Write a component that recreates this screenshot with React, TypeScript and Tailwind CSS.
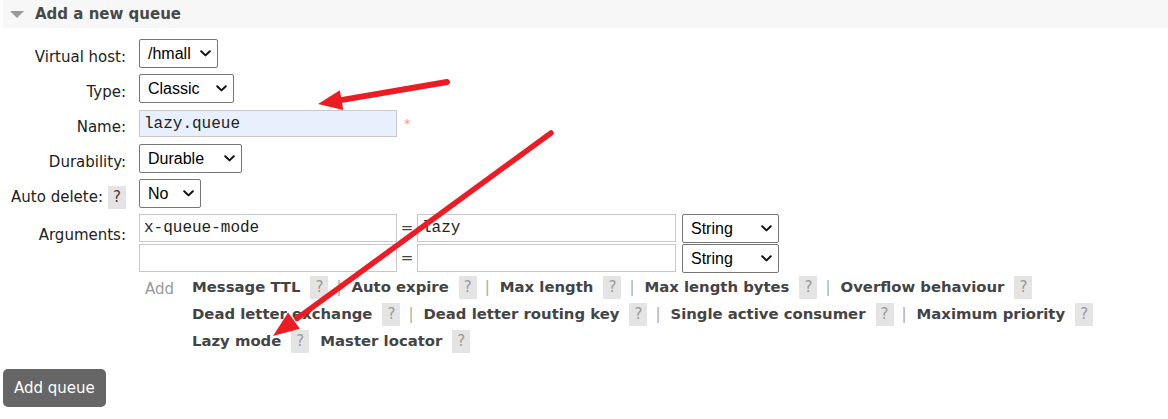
import React from 'react';

const Chevron: React.FC = () => (
    <svg width="11" height="7" viewBox="0 0 11 7" className="shrink-0">
        <path d="M1.2 1.2 L5.5 5.4 L9.8 1.2" fill="none" stroke="#111" strokeWidth="2" strokeLinecap="round" strokeLinejoin="round" />
    </svg>
);

const FakeSelect: React.FC<{ value: string; width: string }> = ({ value, width }) => (
    <div className={`${width} h-[29px] border border-[#767676] rounded-[2px] bg-white flex items-center justify-between pl-[8px] pr-[6px] text-[16px] text-black font-['Liberation_Sans',Arial,sans-serif]`}>
        <span className="leading-none">{value}</span>
        <Chevron />
    </div>
);

const Help: React.FC<{ dark?: boolean }> = ({ dark }) => (
    <span className={`inline-flex items-center justify-center w-[18px] h-[23px] bg-[#e4e4e4] text-[15px] font-normal ${dark ? 'text-[#553333]' : 'text-[#999]'}`}>?</span>
);

const Sep: React.FC = () => <span className="ml-[8px] mr-[10px] text-[#aaa] font-normal text-[15px]">|</span>;

type Arg = { name: string; last?: boolean };

const rows: Arg[][] = [
    [{ name: 'Message TTL' }, { name: 'Auto expire' }, { name: 'Max length' }, { name: 'Max length bytes' }, { name: 'Overflow behaviour', last: true }],
    [{ name: 'Dead letter exchange' }, { name: 'Dead letter routing key' }, { name: 'Single active consumer' }, { name: 'Maximum priority', last: true }],
    [{ name: 'Lazy mode', last: true }, { name: 'Master locator', last: true }],
];

const Label: React.FC<{ children: React.ReactNode }> = ({ children }) => (
    <div className="w-[126px] shrink-0 flex justify-end items-center pt-[8px] text-[#222]">{children}</div>
);

export default function App() {
    return (
        <div className="relative w-[1168px] h-[419px] bg-white overflow-hidden font-['DejaVu_Sans',Verdana,sans-serif] text-[15px]">
            {/* Header */}
            <div className="ml-[3px] h-[28px] bg-[#f7f7f7] flex items-center">
                <svg width="14" height="7" viewBox="0 0 14 7" className="ml-[7px]">
                    <path d="M0 0 H14 L7 7 Z" fill="#999" />
                </svg>
                <span className="ml-[11px] font-bold text-[#484848] leading-none">Add a new queue</span>
            </div>

            {/* Form */}
            <div className="mt-[8px] flex flex-col">
                <div className="h-[35px] flex items-center">
                    <Label>Virtual host:</Label>
                    <div className="ml-[13px]"><FakeSelect value="/hmall" width="w-[79px]" /></div>
                </div>
                <div className="h-[35px] flex items-center">
                    <Label>Type:</Label>
                    <div className="ml-[13px]"><FakeSelect value="Classic" width="w-[95px]" /></div>
                </div>
                <div className="h-[35px] flex items-center">
                    <Label>Name:</Label>
                    <div className="ml-[13px] w-[258px] h-[27px] border border-[#c8c8c8] bg-[#e8f0fe] flex items-center pl-[4px] text-[16px] text-[#222] font-['Liberation_Mono','Courier_New',monospace]">lazy.queue</div>
                    <span className="ml-[7px] text-[13px] text-[#f39a9a]">*</span>
                </div>
                <div className="h-[35px] flex items-center">
                    <Label>Durability:</Label>
                    <div className="ml-[13px]"><FakeSelect value="Durable" width="w-[103px]" /></div>
                </div>
                <div className="h-[35px] flex items-center">
                    <div className="w-[126px] shrink-0 flex justify-end items-center gap-[5px] text-[#222]">
                        <span className="pt-[8px]">Auto delete:</span>
                        <span className="pt-[8px]"><Help dark /></span>
                    </div>
                    <div className="ml-[13px]"><FakeSelect value="No" width="w-[62px]" /></div>
                </div>

                {/* Arguments */}
                <div className="mt-[3px] flex items-start">
                    <div className="w-[126px] shrink-0 flex justify-end pt-[10px] text-[#222]">Arguments:</div>
                    <div className="ml-[13px] flex flex-col gap-[1px]">
                        {['x-queue-mode', ''].map((key, i) => (
                            <div key={i} className="h-[29px] flex items-start">
                                <div className="w-[258px] h-[28px] border border-[#c8c8c8] bg-white flex items-center pl-[4px] text-[16px] text-[#222] font-['Liberation_Mono','Courier_New',monospace]">{key}</div>
                                <span className="w-[20px] h-[28px] flex items-center justify-center text-[#444]">=</span>
                                <div className="w-[259px] h-[28px] border border-[#c8c8c8] bg-white flex items-center pl-[4px] text-[16px] text-[#222] font-['Liberation_Mono','Courier_New',monospace]">{i === 0 ? 'lazy' : ''}</div>
                                <div className="ml-[6px]"><FakeSelect value="String" width="w-[97px]" /></div>
                            </div>
                        ))}
                    </div>
                </div>

                {/* Shortcuts */}
                <div className="mt-[3px] ml-[145px] flex items-start">
                    <span className="w-[47px] shrink-0 pt-[2px] text-[#999]">Add</span>
                    <div className="flex flex-col">
                        {rows.map((row, r) => (
                            <div key={r} className="h-[27px] flex items-start">
                                <div className="h-[23px] flex items-center font-bold text-[#444] text-[14.85px]">
                                    {row.map((a, i) => (
                                        <React.Fragment key={a.name}>
                                            <span className={i > 0 && r === 2 ? 'ml-[11px]' : ''}>{a.name}</span>
                                            <span className="ml-[10px]"><Help /></span>
                                            {!a.last && <Sep />}
                                        </React.Fragment>
                                    ))}
                                </div>
                            </div>
                        ))}
                    </div>
                </div>

                <div className="mt-[12px] ml-[3px]">
                    <button className="h-[38px] px-[11px] bg-[#666] rounded-[5px] text-white text-[15px] leading-none">Add queue</button>
                </div>
            </div>

            {/* Annotation arrows */}
            <svg className="absolute inset-0 pointer-events-none" width="1168" height="419">
                <line x1="447" y1="82" x2="338" y2="100.6" stroke="#ed1c24" strokeWidth="6" strokeLinecap="round" />
                <polygon points="318,104 339.9,90.2 343.3,109.9" fill="#ed1c24" />
                <line x1="551" y1="133" x2="297" y2="318.5" stroke="#ed1c24" strokeWidth="5.5" strokeLinecap="round" />
                <polygon points="273,336 288.1,312.6 299.9,328.8" fill="#ed1c24" />
            </svg>
        </div>
    );
}
